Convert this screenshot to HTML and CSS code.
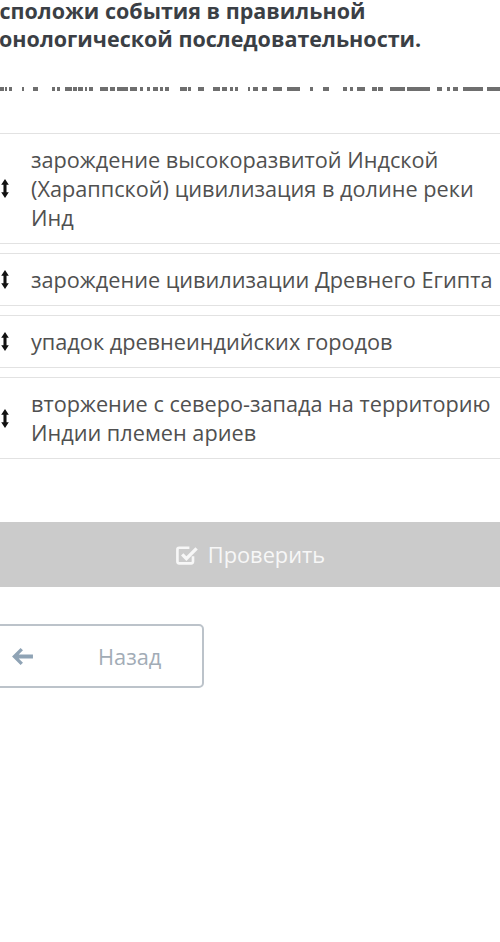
FILE: index.html
```html
<!DOCTYPE html>
<html lang="ru">
<head>
  <meta charset="UTF-8" />
  <meta name="viewport" content="width=device-width, initial-scale=1.0" />
  <title>Хронология</title>
  <link rel="stylesheet" href="styles.css">
</head>
<body>
  <div class="page">
    <h2 class="title">Расположи события в правильной хронологической последовательности.</h2>
    <div class="cut-line"></div>

    <ul class="sort-list">
      <li class="item">
        <svg class="handle" viewBox="0 0 8 20"><path d="M4 0 L8 6 H5.6 V14 H8 L4 20 L0 14 H2.4 V6 H0 Z" /></svg>
        <span>зарождение высокоразвитой Индской (Хараппской) цивилизация в долине реки Инд</span>
      </li>
      <li class="item">
        <svg class="handle" viewBox="0 0 8 20"><path d="M4 0 L8 6 H5.6 V14 H8 L4 20 L0 14 H2.4 V6 H0 Z" /></svg>
        <span>зарождение цивилизации Древнего Египта</span>
      </li>
      <li class="item">
        <svg class="handle" viewBox="0 0 8 20"><path d="M4 0 L8 6 H5.6 V14 H8 L4 20 L0 14 H2.4 V6 H0 Z" /></svg>
        <span>упадок древнеиндийских городов</span>
      </li>
      <li class="item">
        <svg class="handle" viewBox="0 0 8 20"><path d="M4 0 L8 6 H5.6 V14 H8 L4 20 L0 14 H2.4 V6 H0 Z" /></svg>
        <span>вторжение с северо-запада на территорию Индии племен ариев</span>
      </li>
    </ul>

    <button class="check-btn">
      <svg viewBox="0 0 20 20"><path class="box" d="M15 11v4.5a1.5 1.5 0 0 1-1.5 1.5h-10A1.5 1.5 0 0 1 2 15.5v-10A1.5 1.5 0 0 1 3.5 4H12" /><path class="tick" d="M6 9.5l3.5 3.5L18 4.5" /></svg>
      Проверить
    </button>

    <button class="back-btn">
      <svg viewBox="0 0 24 20"><path d="M10 1 L1 10 L10 19 L12.5 16.5 L8 12 H23 V8 H8 L12.5 3.5 Z" /></svg>
      <span>Назад</span>
    </button>
  </div>
</body>
</html>
```

FILE: styles.css
```css
body {
  margin: 0;
  background-color: #fff;
  font-family: 'Open Sans', sans-serif;
  overflow: hidden;
}
.page {
  width: 500px;
}
.title {
  margin: -3px 0 0 -27px;
  width: 480px;
  font-size: 21.5px;
  font-weight: 700;
  line-height: 28px;
  color: #3b3f45;
}
.cut-line {
  margin-top: 34px;
  height: 4px;
  background: linear-gradient(90deg, #555 0 4px, #0000 4px 5px, #555 5px 7px, #0000 7px 9px, #555 9px 12px, #0000 12px 22px, #555 22px 24px, #0000 24px 33px, #555 33px 38px, #0000 38px 52px, #555 52px 55px, #0000 55px 57px, #555 57px 60px, #0000 60px 65px, #555 65px 72px, #0000 72px 73px, #555 73px 77px, #0000 77px 78px, #555 78px 83px, #0000 83px 85px, #555 85px 87px, #0000 87px 89px, #555 89px 93px, #0000 93px 100px, #555 100px 108px, #0000 108px 110px, #555 110px 115px, #0000 115px 117px, #555 117px 128px, #0000 128px 130px, #555 130px 137px, #0000 137px 140px, #555 140px 143px, #0000 143px 147px, #555 147px 150px, #0000 150px 153px, #555 153px 158px, #0000 158px 160px, #555 160px 163px, #0000 163px 165px, #555 165px 169px, #0000 169px 180px, #555 180px 187px, #0000 187px 188px, #555 188px 191px, #0000 191px 198px, #555 198px 204px, #0000 204px 213px, #555 213px 220px, #0000 220px 222px, #555 222px 227px, #0000 227px 230px, #555 230px 233px, #0000 233px 235px, #555 235px 238px, #0000 238px 248px, #555 248px 250px, #0000 250px 253px, #555 253px 258px, #0000 258px 262px, #555 262px 267px, #0000 267px 273px, #555 273px 282px, #0000 282px 287px, #555 287px 300px, #0000 300px 310px, #555 310px 313px, #0000 313px 323px, #555 323px 329px, #0000 329px 343px, #555 343px 347px, #0000 347px 350px, #555 350px 353px, #0000 353px 357px, #555 357px 365px, #0000 365px 372px, #555 372px 377px, #0000 377px 378px, #555 378px 383px, #0000 383px 390px, #555 390px 405px, #0000 405px 407px, #555 407px 430px, #0000 430px 437px, #555 437px 442px, #0000 442px 447px, #555 447px 450px, #0000 450px 453px, #555 453px 458px, #0000 458px 463px, #555 463px 483px, #0000 483px 487px, #555 487px 500px);
  opacity: 0.85;
}
.sort-list {
  list-style: none;
  margin: 42px 0 0;
  padding: 0;
}
.item {
  display: flex;
  align-items: center;
  gap: 22px;
  margin: 0 -10px 9px -20px;
  padding: 11px 6px 11px 20px;
  border: 1px solid #e2e2e2;
  font-size: 21.7px;
  line-height: 29px;
  color: #505050;
}
.handle {
  flex: none;
  width: 8px;
  height: 19px;
  fill: #111;
}
.check-btn {
  display: flex;
  align-items: center;
  justify-content: center;
  gap: 9px;
  width: 520px;
  height: 65px;
  margin: 63px -10px 0;
  border: none;
  background-color: #cbcbcb;
  color: #f7f7f7;
  font-family: inherit;
  font-size: 21.8px;
}
.check-btn svg {
  width: 24px;
  height: 24px;
  fill: none;
  stroke: #f7f7f7;
}
.check-btn .box {
  stroke-width: 2.2;
}
.check-btn .tick {
  stroke-width: 2.8;
}
.back-btn {
  display: flex;
  align-items: center;
  gap: 64px;
  width: 214px;
  height: 64px;
  margin: 37px 0 0 -10px;
  padding: 0 0 0 19px;
  border: 2px solid #bcc3ca;
  border-radius: 5px;
  background-color: #fff;
  color: #a2acb6;
  font-family: inherit;
  font-size: 21.8px;
}
.back-btn svg {
  width: 23px;
  height: 19px;
  fill: #8fa3b5;
}
```
